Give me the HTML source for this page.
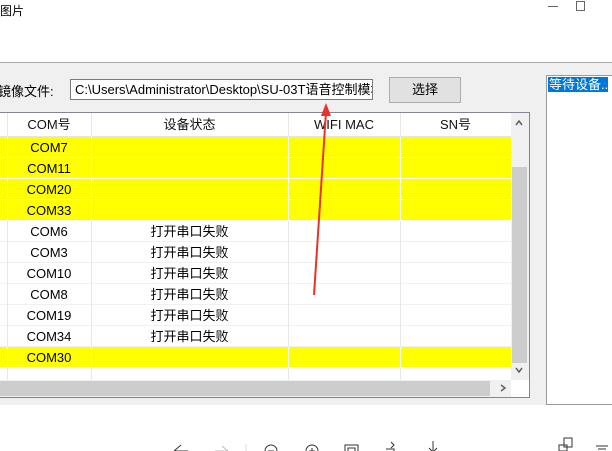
<!DOCTYPE html>
<html><head><meta charset="utf-8"><style>
*{margin:0;padding:0;box-sizing:border-box}
body{width:612px;height:451px;overflow:hidden;background:#fff;position:relative;font-family:"Liberation Sans","Noto Sans CJK SC",sans-serif;font-size:12px;color:#000}
.a{position:absolute}
.row{position:absolute;left:0;width:511px;height:21px;border-bottom:1px solid #f0f0f0}
.y{background:#ffff00;border-bottom:1px solid #fff}
.c{position:absolute;top:0;height:21px;line-height:21px;text-align:center;font-size:13px}
.vl{position:absolute;top:113px;width:1px;height:267px;background:#e8e8e8}
.vw{position:absolute;width:1px;height:84px;top:137px;background:#fff}
</style></head><body>
<div class="a" style="left:0;top:2px;font-size:12px">图片</div>
<div class="a" style="left:548px;top:6px;width:10px;height:1px;background:#666"></div>
<div class="a" style="left:576px;top:1px;width:9px;height:10px;border:1px solid #666"></div>
<div class="a" style="left:0;top:62px;width:612px;height:1px;background:#aaa"></div>
<div class="a" style="left:0;top:63px;width:612px;height:342px;background:#f0f0f0"></div>
<div class="a" style="left:546px;top:75px;width:66px;height:330px;background:#fff;border:1px solid #999;border-right:none"></div>
<div class="a" style="left:548px;top:77px;width:60px;height:15px;background:#0078d7;color:#fff;line-height:15px;padding-left:1px;white-space:nowrap;overflow:hidden;font-size:13px">等待设备...</div>
<div class="a" style="left:-2px;top:81px;font-size:13px">镜像文件:</div>
<div class="a" style="left:70px;top:79px;width:303px;height:21px;background:#fff;border:1px solid #7a7a7a;line-height:19px;padding-left:4px;white-space:nowrap;overflow:hidden;font-size:13px">C:\Users\Administrator\Desktop\SU-03T语音控制模块.j</div>
<div class="a" style="left:389px;top:77px;width:72px;height:26px;background:#e1e1e1;border:1px solid #adadad;text-align:center;line-height:24px;font-size:13px">选择</div>
<div class="a" style="left:0;top:112px;width:530px;height:286px;border:1px solid #828790;border-left:none;background:#fff"></div>
<div class="a" style="left:0;top:113px;width:511px;height:267px;overflow:hidden">
 <div class="row" style="top:0;height:24px;background:#fff;border-bottom:1px solid #e5e5e5">
  <div class="c" style="left:7px;width:84px;line-height:24px;color:#111">COM号</div>
  <div class="c" style="left:91px;width:197px;line-height:24px;color:#111">设备状态</div>
  <div class="c" style="left:288px;width:112px;line-height:24px;color:#111">WIFI MAC</div>
  <div class="c" style="left:400px;width:111px;line-height:24px;color:#111">SN号</div>
 </div>
 <div class="row y" style="top:24px"><div class="c" style="left:7px;width:84px">COM7</div></div>
 <div class="row y" style="top:45px"><div class="c" style="left:7px;width:84px">COM11</div></div>
 <div class="row y" style="top:66px"><div class="c" style="left:7px;width:84px">COM20</div></div>
 <div class="row y" style="top:87px"><div class="c" style="left:7px;width:84px">COM33</div></div>
 <div class="row" style="top:108px"><div class="c" style="left:7px;width:84px">COM6</div><div class="c" style="left:91px;width:197px">打开串口失败</div></div>
 <div class="row" style="top:129px"><div class="c" style="left:7px;width:84px">COM3</div><div class="c" style="left:91px;width:197px">打开串口失败</div></div>
 <div class="row" style="top:150px"><div class="c" style="left:7px;width:84px">COM10</div><div class="c" style="left:91px;width:197px">打开串口失败</div></div>
 <div class="row" style="top:171px"><div class="c" style="left:7px;width:84px">COM8</div><div class="c" style="left:91px;width:197px">打开串口失败</div></div>
 <div class="row" style="top:192px"><div class="c" style="left:7px;width:84px">COM19</div><div class="c" style="left:91px;width:197px">打开串口失败</div></div>
 <div class="row" style="top:213px"><div class="c" style="left:7px;width:84px">COM34</div><div class="c" style="left:91px;width:197px">打开串口失败</div></div>
 <div class="row y" style="top:234px"><div class="c" style="left:7px;width:84px">COM30</div></div>
</div>
<div class="vl" style="left:7px"></div><div class="vl" style="left:91px"></div><div class="vl" style="left:288px"></div><div class="vl" style="left:400px"></div>
<div class="vw" style="left:7px"></div><div class="vw" style="left:91px"></div><div class="vw" style="left:288px"></div><div class="vw" style="left:400px"></div>
<div class="vw" style="left:7px;top:347px;height:21px"></div><div class="vw" style="left:91px;top:347px;height:21px"></div><div class="vw" style="left:288px;top:347px;height:21px"></div><div class="vw" style="left:400px;top:347px;height:21px"></div>
<div class="a" style="left:511px;top:113px;width:18px;height:267px;background:#f0f0f0"></div>
<div class="a" style="left:512px;top:167px;width:15px;height:196px;background:#cdcdcd"></div>
<div class="a" style="left:0;top:380px;width:511px;height:17px;background:#f0f0f0"></div>
<div class="a" style="left:0;top:381px;width:490px;height:15px;background:#cdcdcd"></div>
<svg class="a" style="left:0;top:0" width="612" height="451">
<g stroke="#606060" fill="none" stroke-width="1.5">
<path d="M516 125 L519 121 L522 125"/>
<path d="M516 368 L519 372 L522 368"/>
<path d="M501 385 L505 388 L501 391"/>
</g>
<line x1="314" y1="295" x2="326" y2="112" stroke="#e8322a" stroke-width="2"/>
<polygon points="326,103 321,116 331,116" fill="#e8322a"/>
<g stroke="#333" fill="none" stroke-width="1">
<path d="M174 451 L181 445 M174 451 H188"/>
<path d="M215 451 H227 M222 446 L228 451" stroke="#bbb"/>
<line x1="246" y1="444" x2="246" y2="451" stroke="#ddd"/>
<circle cx="271" cy="451" r="6"/><path d="M268 451H274"/>
<circle cx="312" cy="451" r="6"/><path d="M309 451H315M312 448V454"/>
<rect x="345" y="445" width="13" height="10"/><rect x="348" y="448" width="7" height="6"/>
<path d="M386 449 H394 V455 M391 442 L394 445 L391 448"/>
<path d="M433 441 V451 M429 448 L433 452 L437 448"/>
<rect x="559" y="445" width="8" height="6"/><rect x="564" y="438" width="8" height="9"/>
<path d="M596 446 H608 M598 449 H606"/>
</g>
</svg>
</body></html>
